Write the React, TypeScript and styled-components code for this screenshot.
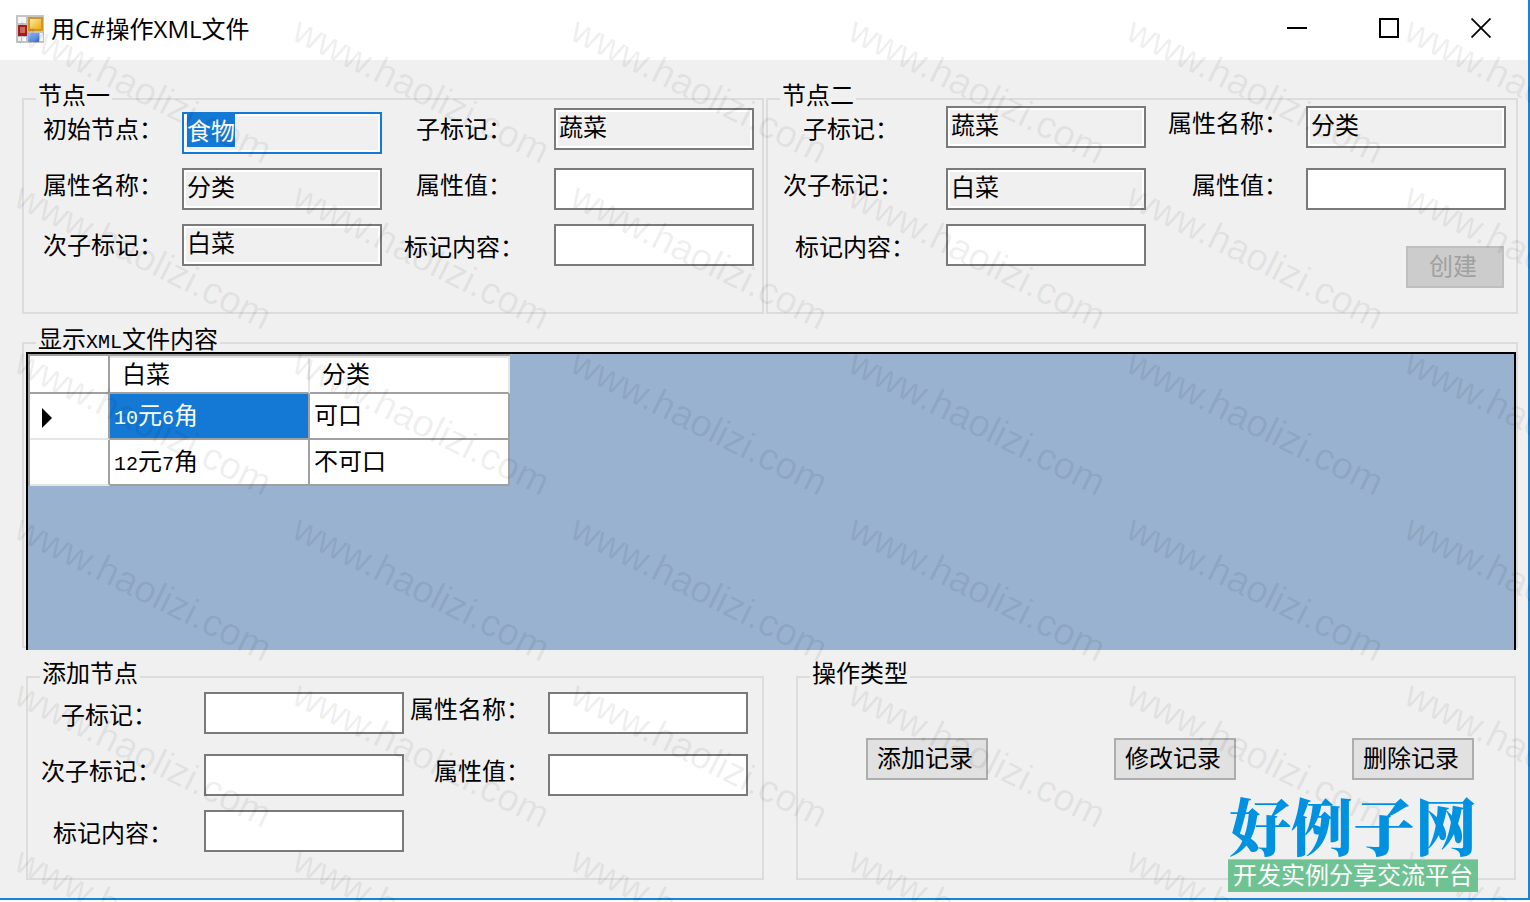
import React, { useEffect, useRef } from "react";
import styled, { createGlobalStyle } from "styled-components";

const cjk = '"Noto Sans CJK SC", sans-serif';

const GlobalStyle = createGlobalStyle`
  * { box-sizing: border-box; }
  body {
    margin: 0;
    background: #fff;
    color: #000;
    font: 24px/24px "Liberation Sans", ${cjk};
  }
  button, input, table { font: inherit; color: inherit; }
`;

const Page = styled.div`
  position: relative;
  min-height: 100vh;
  overflow: hidden;
`;

const Window = styled.div`
  background: #f0f0f0;
  border: solid #1883d7;
  border-width: 0 2px 2px 0;
`;

const TitleBar = styled.header`
  display: flex;
  height: 60px;
  padding: 0 1px 0 16px;
  background: #fff;
`;

const IconArt = styled.svg`
  width: 28px;
  height: 28px;
  margin-top: 15px;
`;

const Title = styled.h1`
  flex: 1;
  margin: 0 0 0 7px;
  font: 400 24px/58px "Open Sans", ${cjk};
`;

const CaptionButton = styled.button`
  width: 92px;
  height: 56px;
  padding: 0;
  border: 0;
  background: transparent;
  display: flex;
  align-items: center;
  justify-content: center;
`;

const Client = styled.main`
  display: flex;
  flex-direction: column;
  gap: 14px;
  padding: 24px 10px 18px 22px;
`;

const TopRow = styled.div`
  display: grid;
  grid-template-columns: 742fr 752fr;
  gap: 2px;
`;

const BottomRow = styled.div`
  display: grid;
  grid-template-columns: 738fr 720fr;
  gap: 32px;
  padding: 0 2px 0 4px;
`;

const Group = styled.fieldset`
  margin: 0;
  padding: 0;
  min-width: 0;
  border: 2px solid #dcdcdc;
`;

const Legend = styled.legend`
  margin-left: 12px;
  padding: 0 2px 6px;
  white-space: nowrap;
`;

const HalfWidth = styled.span`
  font: 20px/16px "Liberation Mono", monospace;
`;

const FieldGrid = styled.div<{ $columns: string; $padding: string }>`
  display: grid;
  grid-template-columns: ${(p) => p.$columns};
  margin-top: -14px;
  padding: ${(p) => p.$padding};
`;

const Column = styled.div<{ $rows: string; $top: number; $gap?: number }>`
  display: grid;
  grid-template-rows: ${(p) => p.$rows};
  align-items: start;
  align-content: start;
  padding-top: ${(p) => p.$top}px;
  padding-left: ${(p) => p.$gap ?? 0}px;
`;

const Label = styled.label<{ $indent?: number }>`
  margin-left: ${(p) => p.$indent ?? 0}px;
  white-space: nowrap;
`;

const TextBox = styled.input`
  width: 100%;
  min-width: 0;
  height: 42px;
  padding: 2px 3px 10px;
  border: 2px solid #7a7a7a;
  border-radius: 0;
  background: #fff;
  outline: none;
  &:read-only {
    background: #f0f0f0;
    box-shadow: inset 0 0 0 2px #fff;
  }
  &:focus { border-color: #1479d5; }
  &::selection { background: #1479d5; color: #fff; }
`;

const PushButton = styled.button`
  height: 42px;
  width: 122px;
  padding: 0 4px 0 0;
  border: 2px solid #adadad;
  border-radius: 0;
  background: #e1e1e1;
  &:disabled {
    width: 98px;
    justify-self: end;
    margin-right: 2px;
    border-color: #bfbfbf;
    background: #ccc;
    color: #a0a0a0;
  }
`;

const Actions = styled.div`
  display: grid;
  grid-template-columns: 248fr 238fr 122px;
  margin-top: 46px;
  padding: 0 40px 0 68px;
`;

const DataPanel = styled.div`
  height: 298px;
  margin: -6px 0 -4px 2px;
  border: solid #000;
  border-width: 2px 2px 0;
  background: #99b2cf;
  position: relative;
`;

const DataTable = styled.table`
  width: 482px;
  table-layout: fixed;
  border-collapse: separate;
  border-spacing: 0;
  border: solid #a0a0a0;
  border-width: 2px 0 0 2px;
  background: #fff;
`;

const HeadCell = styled.th`
  height: 38px;
  padding: 0 0 0 12px;
  text-align: left;
  font-weight: 400;
  border: solid #e5e5e5;
  border-width: 2px 2px 2px 0;
  border-bottom-color: #a0a0a0;
`;

const CornerCell = styled.td`
  width: 80px;
  padding: 0;
  border: solid #a0a0a0;
  border-width: 0 2px 2px 0;
`;

const RowHead = styled.th`
  padding: 0 0 0 12px;
  text-align: left;
  border: solid #a0a0a0;
  border-width: 0 2px 2px 0;
  border-bottom-color: #e5e5e5;
  svg { display: block; margin-top: 4px; }
`;

const Cell = styled.td<{ $selected?: boolean }>`
  height: 46px;
  padding: 0 4px;
  border: solid #a0a0a0;
  border-width: 0 2px 2px 0;
  background: ${(p) => (p.$selected ? "#1479d5" : "#fff")};
  background-clip: padding-box;
  color: ${(p) => (p.$selected ? "#fff" : "#000")};
`;

const Watermark = styled.svg`
  position: absolute;
  inset: 0;
  width: 100%;
  height: 100%;
  pointer-events: none;
  fill: #000;
  fill-opacity: 0.07;
  font: 38px "Liberation Sans", sans-serif;
`;

const SiteLogo = styled.div`
  position: absolute;
  right: 52px;
  bottom: 10px;
  width: 250px;
  text-align: center;
  white-space: nowrap;
`;

const SiteName = styled.div`
  font: 900 62px/68px "Noto Serif CJK SC", ${cjk};
  color: #0092e0;
`;

const SiteTagline = styled.div`
  padding: 4px 0;
  border-top: 1px solid #a5d0b6;
  background: #6fc392;
  color: #fff;
`;

function AppIcon() {
  return (
    <IconArt viewBox="0 0 28 28" aria-hidden="true">
      <defs>
        <linearGradient id="gold" x1="0" y1="0" x2="1" y2="1">
          <stop offset="0" stopColor="#ffe9a0" />
          <stop offset="1" stopColor="#efab12" />
        </linearGradient>
        <linearGradient id="blue" x1="0" y1="0" x2="1" y2="1">
          <stop offset="0" stopColor="#9cc0f5" />
          <stop offset="1" stopColor="#3a70d0" />
        </linearGradient>
      </defs>
      <rect width="28" height="28" fill="#c4c4c4" />
      <rect x="2" y="2" width="8" height="6" fill="#f6f6f6" />
      <rect x="2" y="22" width="3" height="4" fill="#fff" />
      <rect x="6" y="22" width="4" height="4" fill="#fff" />
      <rect x="24" y="18" width="3" height="8" fill="#f4f4f4" />
      <rect x="2" y="10" width="9" height="11" fill="#a81c1c" />
      <rect x="4" y="12" width="5" height="6" fill="#d9685f" />
      <rect x="12" y="2" width="15" height="14" fill="#c9972b" />
      <rect x="14" y="4" width="11" height="10" fill="url(#gold)" />
      <rect x="12" y="18" width="11" height="9" fill="url(#blue)" />
    </IconArt>
  );
}

interface FieldProps {
  id: string;
  value?: string;
}

function Field({ id, value }: FieldProps) {
  return <TextBox id={id} type="text" defaultValue={value} readOnly={value !== undefined} />;
}

export default function App() {
  const first = useRef<HTMLInputElement>(null);
  useEffect(() => {
    first.current?.focus();
    first.current?.select();
  }, []);

  return (
    <Page>
      <GlobalStyle />
      <Window>
        <TitleBar>
          <AppIcon />
          <Title>用C#操作XML文件</Title>
          <CaptionButton aria-label="最小化">
            <svg width="20" height="20"><path d="M0 10h20" stroke="#000" strokeWidth="2" /></svg>
          </CaptionButton>
          <CaptionButton aria-label="最大化">
            <svg width="20" height="20"><rect x="1" y="1" width="18" height="18" fill="none" stroke="#000" strokeWidth="2" /></svg>
          </CaptionButton>
          <CaptionButton aria-label="关闭">
            <svg width="20" height="20"><path d="M.5 .5l19 19M19.5 .5l-19 19" stroke="#000" strokeWidth="1.8" /></svg>
          </CaptionButton>
        </TitleBar>
        <Client>
          <TopRow>
            <Group>
              <Legend>节点一</Legend>
              <FieldGrid $columns="139px 1fr 172px 1fr" $padding="0 8px 46px 19px">
                <Column $rows="56px 60px 24px" $top={18}>
                  <Label htmlFor="a-root">初始节点：</Label>
                  <Label htmlFor="a-attr">属性名称：</Label>
                  <Label htmlFor="a-sub">次子标记：</Label>
                </Column>
                <Column $rows="56px 56px 42px" $top={12}>
                  <TextBox id="a-root" ref={first} type="text" defaultValue="食物" readOnly />
                  <Field id="a-attr" value="分类" />
                  <Field id="a-sub" value="白菜" />
                </Column>
                <Column $rows="56px 62px 24px" $top={18} $gap={22}>
                  <Label htmlFor="a-child" $indent={12}>子标记：</Label>
                  <Label htmlFor="a-value" $indent={12}>属性值：</Label>
                  <Label htmlFor="a-content">标记内容：</Label>
                </Column>
                <Column $rows="60px 56px 42px" $top={8}>
                  <Field id="a-child" value="蔬菜" />
                  <Field id="a-value" />
                  <Field id="a-content" />
                </Column>
              </FieldGrid>
            </Group>
            <Group>
              <Legend>节点二</Legend>
              <FieldGrid $columns="163px 1fr 160px 1fr" $padding="0 10px 24px 15px">
                <Column $rows="56px 62px 24px" $top={18}>
                  <Label htmlFor="b-child" $indent={20}>子标记：</Label>
                  <Label htmlFor="b-sub">次子标记：</Label>
                  <Label htmlFor="b-content" $indent={12}>标记内容：</Label>
                </Column>
                <Column $rows="62px 56px 42px" $top={6}>
                  <Field id="b-child" value="蔬菜" />
                  <Field id="b-sub" value="白菜" />
                  <Field id="b-content" />
                </Column>
                <Column $rows="62px 24px" $top={12} $gap={22}>
                  <Label htmlFor="b-attr">属性名称：</Label>
                  <Label htmlFor="b-value" $indent={24}>属性值：</Label>
                </Column>
                <Column $rows="62px 78px 42px" $top={6}>
                  <Field id="b-attr" value="分类" />
                  <Field id="b-value" />
                  <PushButton type="button" disabled>创建</PushButton>
                </Column>
              </FieldGrid>
            </Group>
          </TopRow>

          <Group>
            <Legend>显示<HalfWidth>XML</HalfWidth>文件内容</Legend>
            <DataPanel>
              <DataTable>
                <thead>
                  <tr>
                    <CornerCell />
                    <HeadCell scope="col">白菜</HeadCell>
                    <HeadCell scope="col">分类</HeadCell>
                  </tr>
                </thead>
                <tbody>
                  <tr>
                    <RowHead scope="row" aria-label="当前行">
                      <svg width="10" height="20" aria-hidden="true"><path d="M0 0L10 10L0 20Z" /></svg>
                    </RowHead>
                    <Cell $selected><HalfWidth>10</HalfWidth>元<HalfWidth>6</HalfWidth>角</Cell>
                    <Cell>可口</Cell>
                  </tr>
                  <tr>
                    <RowHead scope="row" />
                    <Cell><HalfWidth>12</HalfWidth>元<HalfWidth>7</HalfWidth>角</Cell>
                    <Cell>不可口</Cell>
                  </tr>
                </tbody>
              </DataTable>
            </DataPanel>
          </Group>

          <BottomRow>
            <Group>
              <Legend>添加节点</Legend>
              <FieldGrid $columns="163px 1fr 144px 1fr" $padding="0 14px 26px 13px">
                <Column $rows="56px 62px 24px" $top={26}>
                  <Label htmlFor="c-child" $indent={20}>子标记：</Label>
                  <Label htmlFor="c-sub">次子标记：</Label>
                  <Label htmlFor="c-content" $indent={12}>标记内容：</Label>
                </Column>
                <Column $rows="62px 56px 42px" $top={14}>
                  <Field id="c-child" />
                  <Field id="c-sub" />
                  <Field id="c-content" />
                </Column>
                <Column $rows="62px 24px" $top={20} $gap={6}>
                  <Label htmlFor="c-attr">属性名称：</Label>
                  <Label htmlFor="c-value" $indent={24}>属性值：</Label>
                </Column>
                <Column $rows="62px 42px" $top={14}>
                  <Field id="c-attr" />
                  <Field id="c-value" />
                </Column>
              </FieldGrid>
            </Group>
            <Group>
              <Legend>操作类型</Legend>
              <Actions>
                <PushButton type="button">添加记录</PushButton>
                <PushButton type="button">修改记录</PushButton>
                <PushButton type="button">删除记录</PushButton>
              </Actions>
            </Group>
          </BottomRow>
        </Client>
      </Window>

      <Watermark aria-hidden="true">
        {Array.from({ length: 36 }, (_, i) => (
          <text key={i} transform={`translate(${12 + (i % 6) * 278} ${39 + Math.floor(i / 6) * 166}) rotate(26.5)`}>
            www.haolizi.com
          </text>
        ))}
      </Watermark>

      <SiteLogo>
        <SiteName>好例子网</SiteName>
        <SiteTagline>开发实例分享交流平台</SiteTagline>
      </SiteLogo>
    </Page>
  );
}
